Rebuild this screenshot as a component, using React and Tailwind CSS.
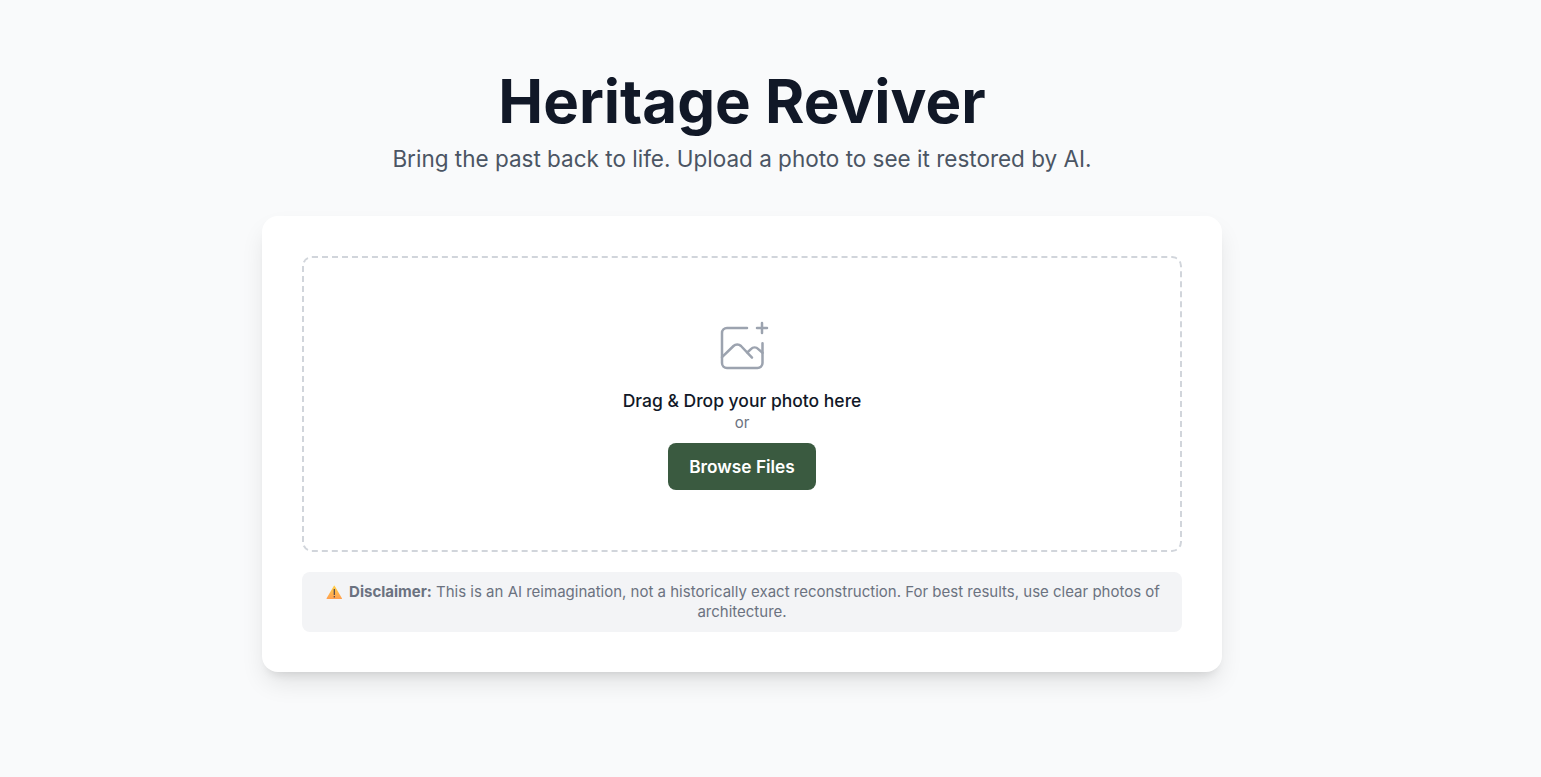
import React from "react";

const App = () => {
  return (
    <div className="min-h-screen bg-[#f9fafb] pr-[57px] pt-[69px] font-['Inter',sans-serif] flex flex-col items-center">
      <header className="text-center">
        <h1 className="text-[60px] leading-[64px] font-bold text-[#111827]">
          Heritage Reviver
        </h1>
        <p className="mt-[9px] text-[22.5px] leading-[34px] text-[#4b5563]">
          Bring the past back to life. Upload a photo to see it restored by AI.
        </p>
      </header>

      <main className="mt-10 w-[960px] h-[456px] rounded-2xl bg-white p-10 shadow-[0_13px_26px_-4px_rgba(0,0,0,0.11),0_8px_10px_-6px_rgba(0,0,0,0.1)]">
        <div className="h-[296px] rounded-[10px] border-2 border-dashed border-[#d1d5db] flex flex-col items-center pt-[58px]">
          <svg
            className="w-[60px] h-[60px] text-[#9ca3af]"
            viewBox="0 0 60 60"
            fill="none"
            stroke="currentColor"
            strokeWidth="2.5"
            strokeLinecap="round"
            strokeLinejoin="round"
          >
            <path d="M35 12H15a5 5 0 0 0-5 5v30a5 5 0 0 0 5 5h30.5a5 5 0 0 0 5-5V27.2" />
            <path d="M10 41.2 21.5 30a5.3 5.3 0 0 1 7.5 0l11 11.7" />
            <path d="m35.3 36.5 3.6-3.4a5.3 5.3 0 0 1 7.4 0l4.2 3.7" />
            <path d="M50 7v10M45 12h10" />
          </svg>
          <p className="mt-[13px] text-[17.5px] leading-[24px] font-medium text-[#111827]">
            Drag & Drop your photo here
          </p>
          <p className="text-[15px] leading-[20px] text-[#6b7280]">or</p>
          <button className="mt-[10px] h-[47px] w-[148px] rounded-lg bg-[#3a5a40] pt-px text-[17.3px] font-semibold text-white">
            Browse Files
          </button>
        </div>

        <div className="mt-5 h-[60px] rounded-lg bg-[#f3f4f6] px-5 py-[10px] text-center text-[15px] leading-[20px] text-[#6b7280]">
          <svg
            className="ml-[2px] mr-[7px] inline-block h-[14px] w-[16px] align-[-2px]"
            viewBox="0 0 16 14"
          >
            <defs>
              <linearGradient id="warning" x1="0" y1="0" x2="0" y2="1">
                <stop offset="0" stopColor="#ffcf48" />
                <stop offset="1" stopColor="#ffa050" />
              </linearGradient>
            </defs>
            <path
              d="M7.8 1a.6.6 0 0 1 1 0l7.1 12.3a.4.4 0 0 1-.3.6H.9a.4.4 0 0 1-.3-.6Z"
              fill="url(#warning)"
            />
            <path d="M8.3 4v6M8.3 11v1.6" stroke="#4b4450" strokeWidth="1.2" />
          </svg>
          <strong className="font-bold">Disclaimer:</strong> This is an AI
          reimagination, not a historically exact reconstruction. For best
          results, use clear photos of architecture.
        </div>
      </main>
    </div>
  );
};

export default App;
